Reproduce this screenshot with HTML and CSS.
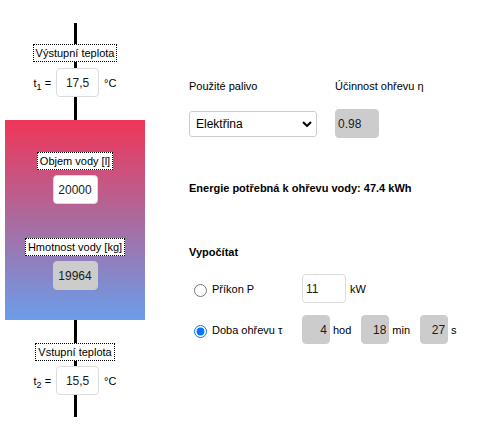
FILE: index.html
```html
<!DOCTYPE html>
<html lang="cs">
<head>
<meta charset="utf-8">
<title>Ohřev vody</title>
<link rel="stylesheet" href="styles.css">
</head>
<body>
<div class="page">
  <div class="scheme">
    <div class="tag">Výstupní teplota</div>
    <div class="temp-row">
      <span class="sym">t<sub>1</sub> =</span>
      <input class="field field-temp" value="17,5">
      <span class="unit">°C</span>
    </div>
    <div class="tank">
      <div class="tag">Objem vody [l]</div>
      <input class="field field-vol" value="20000">
      <div class="tag tag-mass">Hmotnost vody [kg]</div>
      <input class="field field-vol field-ro" value="19964" readonly>
    </div>
    <div class="tag tag-in">Vstupní teplota</div>
    <div class="temp-row temp-row-in">
      <span class="sym">t<sub>2</sub> =</span>
      <input class="field field-temp" value="15,5">
      <span class="unit">°C</span>
    </div>
  </div>

  <div class="calc">
    <div class="pair head">
      <span>Použité palivo</span>
      <span>Účinnost ohřevu η</span>
    </div>
    <div class="pair fuel">
      <div class="select-wrap">
        <select class="select">
          <option>Elektřina</option>
          <option>Zemní plyn</option>
        </select>
        <svg class="chevron" width="10" height="6" viewBox="0 0 10 6"><polyline points="1,1 5,5 9,1" fill="none" stroke="#000" stroke-width="2"/></svg>
      </div>
      <input class="field field-eff field-ro" value="0.98" readonly>
    </div>
    <div class="energy">Energie potřebná k ohřevu vody: 47.4 kWh</div>
    <div class="title">Vypočítat</div>
    <div class="opt opt-power">
      <label class="opt-label"><input type="radio" name="calc" class="radio">Příkon P</label>
      <input class="field field-power" value="11">
      <span class="unit">kW</span>
    </div>
    <div class="opt opt-time">
      <label class="opt-label"><input type="radio" name="calc" class="radio" checked>Doba ohřevu τ</label>
      <input class="field field-time field-ro" value="4" readonly>
      <span class="unit unit-gap">hod</span>
      <input class="field field-time field-ro" value="18" readonly>
      <span class="unit unit-gap">min</span>
      <input class="field field-time field-ro" value="27" readonly>
      <span class="unit">s</span>
    </div>
  </div>
</div>
</body>
</html>
```

FILE: styles.css
```css
* { box-sizing: border-box; }

html, body {
  margin: 0;
  background: #fff;
}

body {
  font-family: "Liberation Sans", Arial, sans-serif;
  font-size: 11px;
  line-height: 14px;
  color: #000;
}

.page {
  display: flex;
  align-items: flex-start;
}

/* left scheme */
.scheme {
  width: 140px;
  margin-left: 5px;
  margin-top: 23px;
  padding: 21px 0 22px;
  display: flex;
  flex-direction: column;
  align-items: center;
  background: linear-gradient(#000, #000) 69px 0 / 3px 100% no-repeat;
}

.tag {
  border: 1px dotted #000;
  background: #fff;
  padding: 1px 2px;
  line-height: 14px;
  white-space: nowrap;
}

.temp-row {
  margin-top: 6px;
  height: 29px;
  display: flex;
  align-items: center;
  gap: 5px;
}

.temp-row-in {
  margin-top: 5px;
}

.sym {
  white-space: nowrap;
  line-height: 14px;
}

.sym sub {
  font-size: 9px;
  line-height: 0;
}

.field {
  font-family: "Liberation Sans", Arial, sans-serif;
  font-size: 12px;
  color: #1b1b1b;
  height: 29px;
  border: 1px solid #dcdcdc;
  border-radius: 4px;
  background: #fff;
  padding: 0 2px;
  margin: 0;
  outline: none;
}

.field-ro {
  background: #cccccc;
  border-color: #cccccc;
}

.field-temp {
  width: 43px;
  text-align: center;
}

.tank {
  margin-top: 23px;
  align-self: stretch;
  height: 200px;
  padding-top: 32px;
  display: flex;
  flex-direction: column;
  align-items: center;
  background: linear-gradient(180deg, #ef3658 0%, #ab6a9e 50%, #6b9dea 100%);
}

.field-vol {
  width: 45px;
  margin-top: 5px;
  text-align: center;
}

.tag-mass {
  margin-top: 34px;
}

.tag-in {
  margin-top: 23px;
}

/* right calculator */
.calc {
  margin-left: 44px;
  padding-top: 79px;
  display: flex;
  flex-direction: column;
}

.pair {
  display: grid;
  grid-template-columns: 146px auto;
  align-items: center;
}

.fuel {
  margin-top: 16px;
}

.select-wrap {
  position: relative;
  width: 128px;
  height: 26px;
}

.select {
  appearance: none;
  -webkit-appearance: none;
  width: 128px;
  height: 26px;
  border: 1px solid #cdcdcd;
  border-radius: 3px;
  background: #fff;
  font-family: "Liberation Sans", Arial, sans-serif;
  font-size: 12px;
  color: #000;
  padding: 0 20px 0 6px;
  margin: 0;
  outline: none;
}

.chevron {
  position: absolute;
  right: 5px;
  top: 10px;
  pointer-events: none;
}

.field-eff {
  width: 44px;
}

.energy {
  margin-top: 43px;
  font-weight: bold;
  white-space: nowrap;
}

.title {
  margin-top: 50px;
  font-weight: bold;
}

.opt {
  display: flex;
  align-items: center;
  gap: 4px;
  height: 29px;
}

.opt-power {
  margin-top: 15px;
}

.opt-time {
  margin-top: 12px;
  gap: 3px;
}

.opt-label {
  width: 113px;
  margin-right: -4px;
  display: flex;
  align-items: center;
  white-space: nowrap;
}

.opt-time .opt-label {
  margin-right: -3px;
}

.radio {
  width: 13px;
  height: 13px;
  margin: 3px 5px 0 5px;
}

.field-power {
  width: 44px;
  padding-left: 3px;
}

.field-time {
  width: 28px;
  text-align: right;
  padding-right: 2px;
}

.unit-gap {
  margin-right: 7px;
}
```
